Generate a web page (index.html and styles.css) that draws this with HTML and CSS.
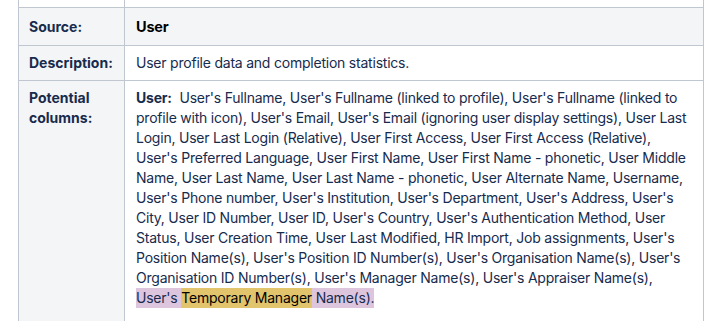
FILE: index.html
```html
<!doctype html>
<html lang="en">
<head>
  <meta charset="utf-8">
  <title>Report source: User</title>
  <link rel="stylesheet" href="styles.css">
</head>
<body>
  <table class="source-table">
    <tr class="row-cut">
      <td class="label-cell"></td>
      <td class="value-cell"></td>
    </tr>
    <tr class="row-head">
      <th class="label-cell">Source:</th>
      <th class="value-cell">User</th>
    </tr>
    <tr>
      <th class="label-cell">Description:</th>
      <td class="value-cell">User profile data and completion statistics.</td>
    </tr>
    <tr class="row-columns">
      <th class="label-cell">Potential columns:</th>
      <td class="value-cell">
        <strong class="group-name">User:</strong> User's Fullname, User's Fullname (linked to profile), User's Fullname (linked to profile with icon), User's Email, User's Email (ignoring user display settings), User Last Login, User Last Login (Relative), User First Access, User First Access (Relative), User's Preferred Language, User First Name, User First Name - phonetic, User Middle Name, User Last Name, User Last Name - phonetic, User Alternate Name, Username, User's Phone number, User's Institution, User's Department, User's Address, User's City, User ID Number, User ID, User's Country, User's Authentication Method, User Status, User Creation Time, User Last Modified, HR Import, Job assignments, User's Position Name(s), User's Position ID Number(s), User's Organisation Name(s), User's Organisation ID Number(s), User's Manager Name(s), User's Appraiser Name(s), <span class="hl-row">User's <span class="hl-term">Temporary Manager</span> Name(s).</span>
      </td>
    </tr>
  </table>
</body>
</html>
```

FILE: styles.css
```css
:root {
  --text: #172b4d;
  --border: #c1c7d0;
  --muted-bg: #f4f5f7;
  --hl-row: #dcc5dd;
  --hl-term: #e2c46c;
}

* {
  margin: 0;
  padding: 0;
  box-sizing: border-box;
}

body {
  font-family: Inter, "Noto Sans", sans-serif;
  font-size: 14px;
  line-height: 20px;
  color: var(--text);
  background: #fff;
  padding-left: 18px;
}

.source-table {
  width: 686px;
  border-collapse: collapse;
  table-layout: fixed;
}

.source-table th,
.source-table td {
  border: 1px solid var(--border);
  padding: 7px 10px;
  text-align: left;
  vertical-align: top;
}

.label-cell {
  width: 106px;
  background-color: var(--muted-bg);
  font-weight: 700;
}

.value-cell {
  padding-left: 11px !important;
  letter-spacing: -0.22px;
}

.row-cut td {
  height: 7px;
  padding: 0 !important;
  border-top: none !important;
  background-color: #fff;
}

.row-head th {
  padding-top: 9px;
  padding-bottom: 8px;
  background-color: var(--muted-bg);
}

.row-head .value-cell {
  color: #000;
  font-size: 14.5px;
}

.row-columns td {
  padding-bottom: 20px;
}

.group-name {
  font-weight: 700;
  margin-right: 4px;
}

.hl-row {
  background-color: var(--hl-row);
  padding: 1px 0 2px;
}

.hl-term {
  background-color: var(--hl-term);
  color: #000;
  padding: 1px 0 2px;
}
```
